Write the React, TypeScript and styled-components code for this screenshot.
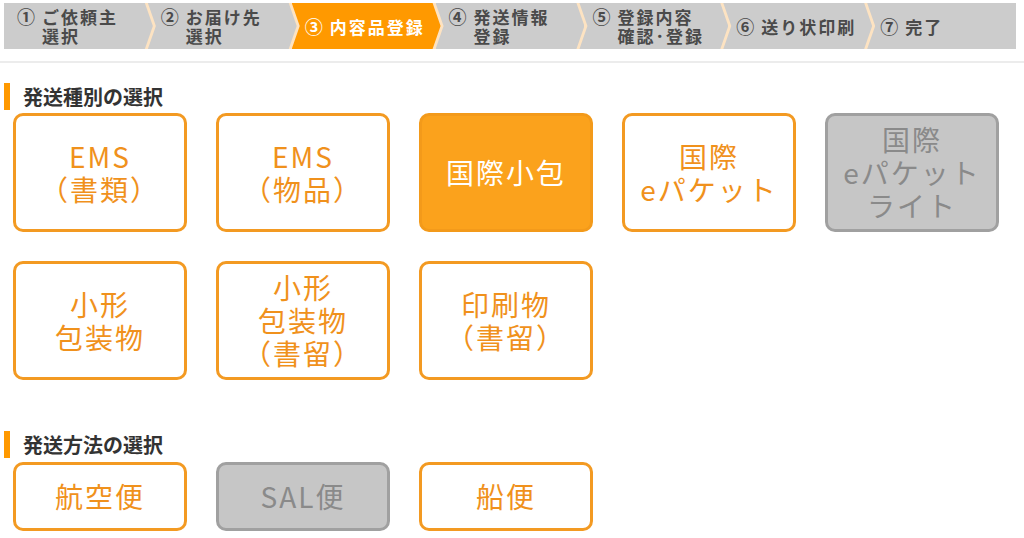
import styled, { createGlobalStyle } from "styled-components";

const ORANGE = "#f39a22";
const ORANGE_FILL = "#fba21c";
const PEACH = "#fde3c2";

const GlobalStyle = createGlobalStyle`
  body {
    margin: 0;
    background: #ffffff;
    font-family: "Noto Sans CJK JP", "Noto Sans", sans-serif;
  }
`;

type Step = { num: string; lines: string[] };

const steps: Step[] = [
  { num: "①", lines: ["ご依頼主", "選択"] },
  { num: "②", lines: ["お届け先", "選択"] },
  { num: "③", lines: ["内容品登録"] },
  { num: "④", lines: ["発送情報", "登録"] },
  { num: "⑤", lines: ["登録内容", "確認･登録"] },
  { num: "⑥", lines: ["送り状印刷"] },
  { num: "⑦", lines: ["完了"] },
];

type Kind = "normal" | "selected" | "disabled";
type Choice = { lines: string[]; kind: Kind };

const typeChoices: Choice[] = [
  { lines: ["EMS", "（書類）"], kind: "normal" },
  { lines: ["EMS", "（物品）"], kind: "normal" },
  { lines: ["国際小包"], kind: "selected" },
  { lines: ["国際", "eパケット"], kind: "normal" },
  { lines: ["国際", "eパケット", "ライト"], kind: "disabled" },
  { lines: ["小形", "包装物"], kind: "normal" },
  { lines: ["小形", "包装物", "（書留）"], kind: "normal" },
  { lines: ["印刷物", "（書留）"], kind: "normal" },
];

const methodChoices: Choice[] = [
  { lines: ["航空便"], kind: "normal" },
  { lines: ["SAL便"], kind: "disabled" },
  { lines: ["船便"], kind: "normal" },
];

const App = () => {
  const activeStep = 2;

  return (
    <>
      <GlobalStyle />
      <StyledTop>
        <StyledStepBar>
          {steps.map((s, i) => (
            <StyledStep
              key={s.num}
              active={i === activeStep}
              first={i === 0}
              last={i === steps.length - 1}
            >
              <StyledStepInner>
                <StyledStepNum>{s.num}</StyledStepNum>
                <StyledStepText>
                  {s.lines.map((l) => (
                    <div key={l}>{l}</div>
                  ))}
                </StyledStepText>
              </StyledStepInner>
            </StyledStep>
          ))}
        </StyledStepBar>
      </StyledTop>
      <StyledDivider />
      <StyledContent>
        <StyledHeading>発送種別の選択</StyledHeading>
        <StyledGrid>
          {typeChoices.map((c) => (
            <StyledChoice key={c.lines.join()} kind={c.kind} tall>
              <span>
                {c.lines.map((l) => (
                  <div key={l}>{l}</div>
                ))}
              </span>
            </StyledChoice>
          ))}
        </StyledGrid>
        <StyledHeading second>発送方法の選択</StyledHeading>
        <StyledGrid>
          {methodChoices.map((c) => (
            <StyledChoice key={c.lines.join()} kind={c.kind}>
              {c.lines[0]}
            </StyledChoice>
          ))}
        </StyledGrid>
      </StyledContent>
    </>
  );
};

export default App;

const StyledTop = styled.div`
  padding: 3px 8px 0 4px;
`;

const StyledStepBar = styled.div`
  display: flex;
  height: 46px;
  background-color: ${PEACH};
`;

const StyledStep = styled.div<{ active?: boolean; first?: boolean; last?: boolean }>`
  flex: 1;
  display: flex;
  align-items: center;
  padding-left: 13px;
  margin-left: ${(p) => (p.first ? "0" : "-5px")};
  position: relative;
  z-index: ${(p) => (p.active ? 2 : 1)};
  background-color: ${(p) => (p.active ? "#ff9900" : "#cccccc")};
  color: ${(p) => (p.active ? "#ffffff" : "#4a4a4a")};
  font-size: 17px;
  font-weight: bold;
  line-height: 19px;
  letter-spacing: 2px;
  clip-path: polygon(
    0 0,
    ${(p) => (p.last ? "100% 0, 100% 100%" : "calc(100% - 8px) 0, 100% 50%, calc(100% - 8px) 100%")},
    0 100%,
    ${(p) => (p.first ? "0 100%" : "8px 50%")}
  );
`;

const StyledStepInner = styled.div`
  display: flex;
  align-items: flex-start;
`;

const StyledStepNum = styled.span`
  margin-right: 7px;
  font-size: 18px;
  letter-spacing: 0;
`;

const StyledStepText = styled.div`
  white-space: nowrap;
`;

const StyledDivider = styled.div`
  height: 2px;
  margin-top: 12px;
  background-color: #ececec;
`;

const StyledContent = styled.div`
  padding: 0 0 0 4px;
`;

const StyledHeading = styled.h2<{ second?: boolean }>`
  display: flex;
  align-items: center;
  height: 27px;
  margin: ${(p) => (p.second ? "51px" : "20px")} 0 ${(p) => (p.second ? "4px" : "3px")};
  padding-left: 13px;
  border-left: 6px solid #ff9900;
  font-size: 20px;
  font-weight: bold;
  color: #333333;
`;

const StyledGrid = styled.div`
  display: grid;
  grid-template-columns: repeat(5, 174px);
  column-gap: 29px;
  row-gap: 29px;
  margin-left: 9px;
`;

const StyledChoice = styled.div<{ kind: Kind; tall?: boolean }>`
  box-sizing: border-box;
  height: ${(p) => (p.tall ? "119px" : "69px")};
  display: flex;
  align-items: center;
  justify-content: center;
  text-align: center;
  border-radius: 10px;
  border: 3px solid
    ${(p) => (p.kind === "disabled" ? "#a0a0a0" : p.kind === "selected" ? "#f39a1a" : ORANGE)};
  background-color: ${(p) =>
    p.kind === "disabled" ? "#c6c6c6" : p.kind === "selected" ? ORANGE_FILL : "#ffffff"};
  color: ${(p) =>
    p.kind === "disabled" ? "#8a8a8a" : p.kind === "selected" ? "#ffffff" : "#f0911c"};
  font-size: 28px;
  line-height: 33px;
  letter-spacing: 2px;
  cursor: pointer;
`;
